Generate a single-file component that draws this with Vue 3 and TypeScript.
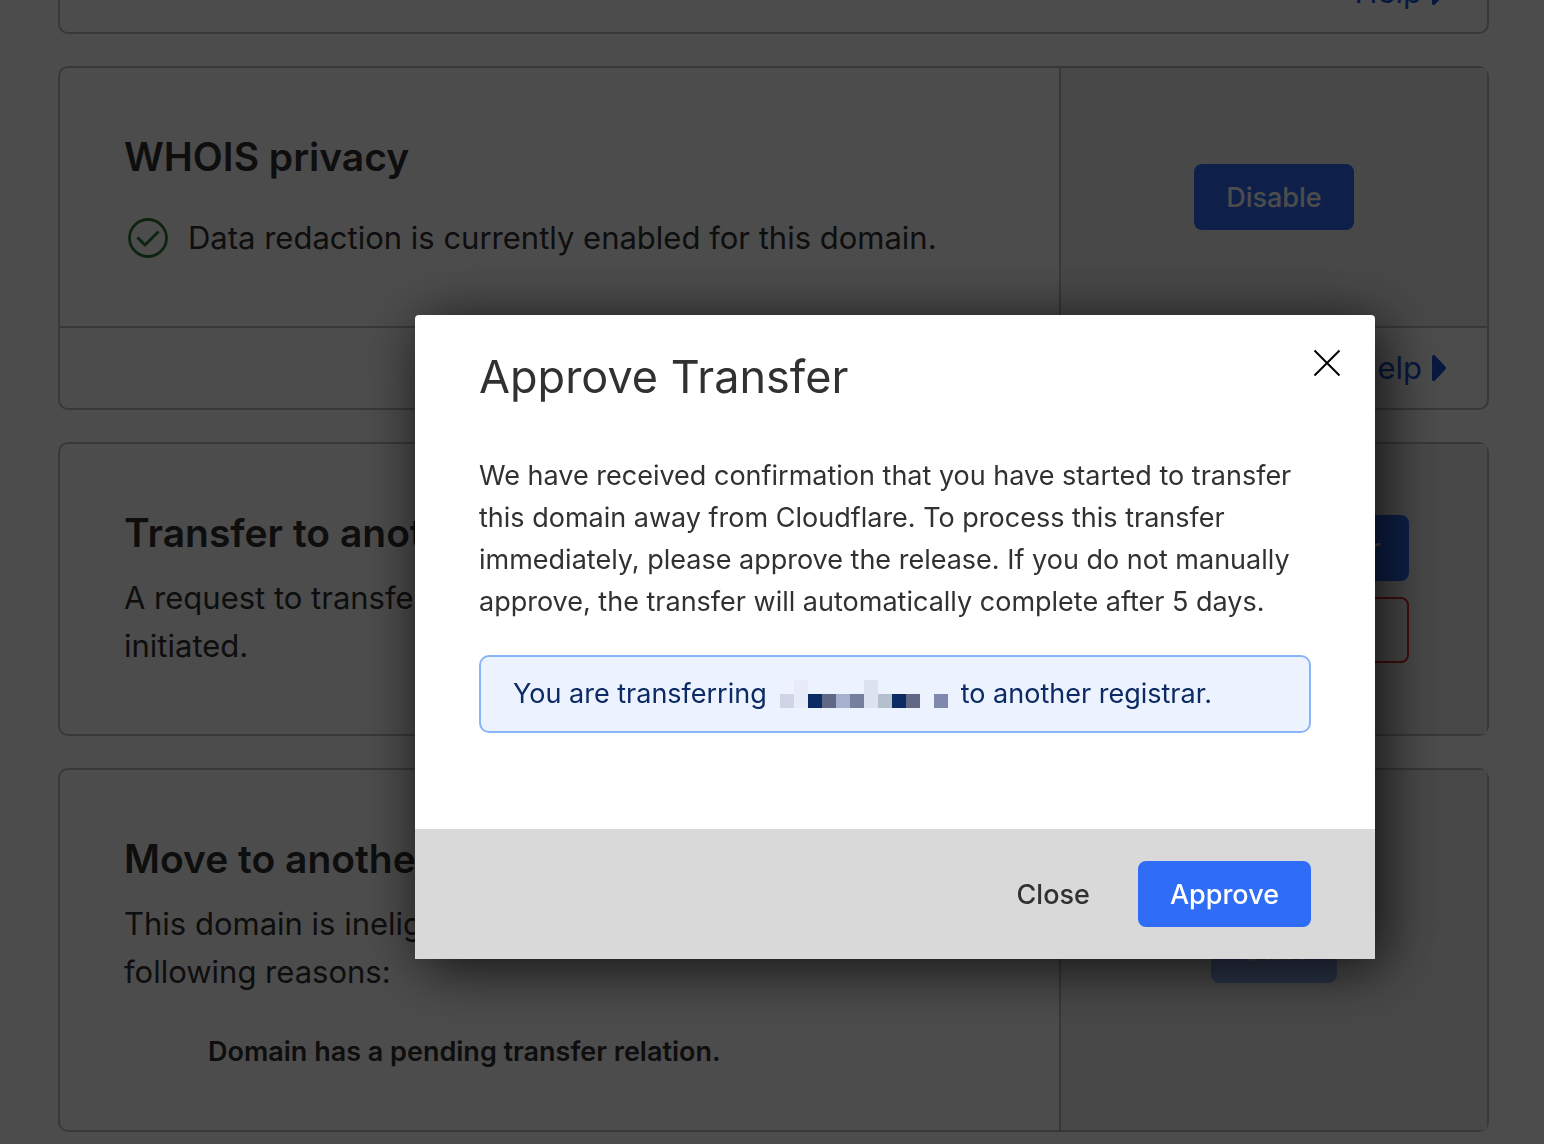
<script setup lang="ts">
interface Block {
  x: number
  y: number
  h: number
  fill: string
}

const blocks: Block[] = [
  { x: 0, y: 14, h: 14, fill: '#cfd5e5' },
  { x: 14, y: 0, h: 28, fill: '#e7ecf8' },
  { x: 28, y: 14, h: 14, fill: '#0c2a63' },
  { x: 42, y: 14, h: 14, fill: '#606885' },
  { x: 56, y: 14, h: 14, fill: '#a6b2cd' },
  { x: 70, y: 14, h: 14, fill: '#767f9b' },
  { x: 84, y: 0, h: 28, fill: '#dde2ef' },
  { x: 98, y: 14, h: 14, fill: '#b5c0cf' },
  { x: 112, y: 14, h: 14, fill: '#0c2a63' },
  { x: 126, y: 14, h: 14, fill: '#606885' },
  { x: 154, y: 14, h: 14, fill: '#7e89ad' },
]
</script>

<template>
  <div class="viewport">
    <main class="page">
      <section class="card">
        <div class="card-foot">
          <a class="help" href="#">Help
            <svg width="14" height="26" viewBox="0 0 14 26" aria-hidden="true"><path d="M0 1.5Q0 0 1.5 0H2.5L13.3 11.6Q14.5 13 13.3 14.4L2.5 26H1.5Q0 26 0 24.5Z" fill="currentColor" /></svg>
          </a>
        </div>
      </section>

      <section class="card">
        <div class="card-row">
          <div class="card-main">
            <h2>WHOIS privacy</h2>
            <p class="status">
              <svg width="40" height="40" viewBox="0 0 40 40" fill="none" stroke="#2f7a3a" aria-hidden="true">
                <circle cx="20" cy="20" r="18.5" stroke-width="2.8" />
                <path d="M9.5 19.5L17 27L30.5 13.5" stroke-width="3" />
              </svg>
              Data redaction is currently enabled for this domain.
            </p>
          </div>
          <div class="card-side">
            <button type="button" class="btn primary">Disable</button>
          </div>
        </div>
        <div class="card-foot ruled">
          <a class="help" href="#">Help
            <svg width="14" height="26" viewBox="0 0 14 26" aria-hidden="true"><path d="M0 1.5Q0 0 1.5 0H2.5L13.3 11.6Q14.5 13 13.3 14.4L2.5 26H1.5Q0 26 0 24.5Z" fill="currentColor" /></svg>
          </a>
        </div>
      </section>

      <section class="card">
        <div class="card-row">
          <div class="card-main">
            <h2>Transfer to another registrar</h2>
            <p>A request to transfer this domain to another registrar was initiated.</p>
          </div>
          <div class="card-side">
            <div class="actions">
              <button type="button" class="btn primary">Confirm transfer</button>
              <button type="button" class="btn danger">Reject transfer</button>
            </div>
          </div>
        </div>
      </section>

      <section class="card">
        <div class="card-row">
          <div class="card-main with-reasons">
            <h2>Move to another account</h2>
            <p>This domain is ineligible to move accounts for one of the following reasons:</p>
            <ul class="reasons">
              <li>Domain has a pending transfer relation.</li>
            </ul>
          </div>
          <div class="card-side">
            <button type="button" class="btn primary" disabled>Start</button>
          </div>
        </div>
      </section>
    </main>

    <div class="overlay">
      <div class="modal" role="dialog" aria-modal="true" aria-labelledby="modal-title">
        <div class="modal-body">
          <header class="modal-head">
            <h1 id="modal-title">Approve Transfer</h1>
            <button type="button" class="dismiss" aria-label="Dismiss">
              <svg width="28" height="28" viewBox="0 0 28 28" fill="none" stroke="#000" stroke-width="2" aria-hidden="true"><path d="M1.5 1.5L26.5 26.5M26.5 1.5L1.5 26.5" /></svg>
            </button>
          </header>
          <p class="message">We have received confirmation that you have started to transfer this domain away from Cloudflare. To process this transfer immediately, please approve the release. If you do not manually approve, the transfer will automatically complete after 5 days.</p>
          <div class="notice">
            <span>You are transferring</span>
            <svg width="168" height="28" viewBox="0 0 168 28" shape-rendering="crispEdges" aria-hidden="true">
              <rect v-for="b in blocks" :key="b.x" :x="b.x" :y="b.y" width="14" :height="b.h" :fill="b.fill" />
            </svg>
            <span>to another registrar.</span>
          </div>
        </div>
        <footer class="modal-foot">
          <button type="button" class="btn plain">Close</button>
          <button type="button" class="btn primary">Approve</button>
        </footer>
      </div>
    </div>
  </div>
</template>

<style>
body {
  margin: 0;
  background: #fff;
}
</style>

<style scoped>
* {
  box-sizing: border-box;
}

.viewport {
  height: 100vh;
  overflow: hidden;
  font-family: Inter, "Liberation Sans", sans-serif;
  font-size: 31px;
  line-height: 48px;
  color: #313131;
}

h1,
h2,
p,
ul {
  margin: 0;
}

.page {
  display: flex;
  flex-direction: column;
  gap: 32px;
  margin-top: -50px;
  padding: 0 55px 32px 58px;
}

.card {
  border: 2px solid #bdbdbd;
  border-radius: 10px;
}

.card-row {
  display: flex;
}

.card-main {
  flex: 1;
  min-width: 0;
  padding: 64px;
}

.with-reasons {
  padding-bottom: 54px;
}

.card-side {
  width: 30%;
  display: flex;
  align-items: center;
  justify-content: center;
  border-left: 2px solid #bdbdbd;
  background: #f2f2f2;
}

h2 {
  margin-bottom: 16px;
  font-size: 39px;
  line-height: 50px;
  font-weight: 600;
}

.status {
  display: flex;
  align-items: center;
  gap: 20px;
  padding: 16px 0 0 4px;
}

.reasons {
  margin-top: 32px;
  padding-left: 84px;
  list-style: none;
  font-size: 27px;
  font-weight: 600;
}

.card-foot {
  display: flex;
  justify-content: flex-end;
  padding: 16px 41px;
}

.ruled {
  border-top: 2px solid #bdbdbd;
}

.help {
  display: flex;
  align-items: center;
  gap: 10px;
  color: #1850d4;
  text-decoration: none;
}

.btn {
  padding: 15px 30px 13px;
  border: 2px solid transparent;
  border-radius: 8px;
  background: transparent;
  font: 500 27px/34px Inter, "Liberation Sans", sans-serif;
  color: #313131;
}

.primary {
  border-color: #2f6df6;
  background: #2f6df6;
  color: #fff;
}

.primary:disabled {
  opacity: 0.5;
}

.danger {
  border-color: #dd2f20;
  color: #dd2f20;
}

.actions {
  display: flex;
  flex-direction: column;
  gap: 16px;
  width: 270px;
}

.actions .btn {
  padding: 15px 16px 13px;
}

.overlay {
  position: fixed;
  inset: 0;
  display: flex;
  align-items: center;
  justify-content: center;
  padding: 130px 0 0 246px;
  background: rgba(0, 0, 0, 0.7);
}

.modal {
  width: 960px;
  border-radius: 4px 4px 0 0;
  background: #fff;
  box-shadow: 8px 8px 60px rgba(0, 0, 0, 0.8);
}

.modal-body {
  padding: 32px 64px 96px;
}

.modal-head {
  display: flex;
  align-items: flex-start;
  justify-content: space-between;
  margin-bottom: 48px;
}

h1 {
  font-size: 45px;
  line-height: 60px;
  font-weight: 400;
}

.dismiss {
  display: flex;
  margin-right: -32px;
  padding: 2px;
  border: 0;
  background: transparent;
}

.message,
.notice {
  font-size: 27px;
  line-height: 42px;
}

.notice {
  display: flex;
  align-items: center;
  gap: 13px;
  margin-top: 32px;
  padding: 16px 32px;
  border: 2px solid #8ab4f8;
  border-radius: 10px;
  background: #ecf3fe;
  color: #0c2a63;
}

.modal-foot {
  display: flex;
  justify-content: flex-end;
  gap: 16px;
  padding: 32px 64px;
  background: #d9d9d9;
}
</style>
